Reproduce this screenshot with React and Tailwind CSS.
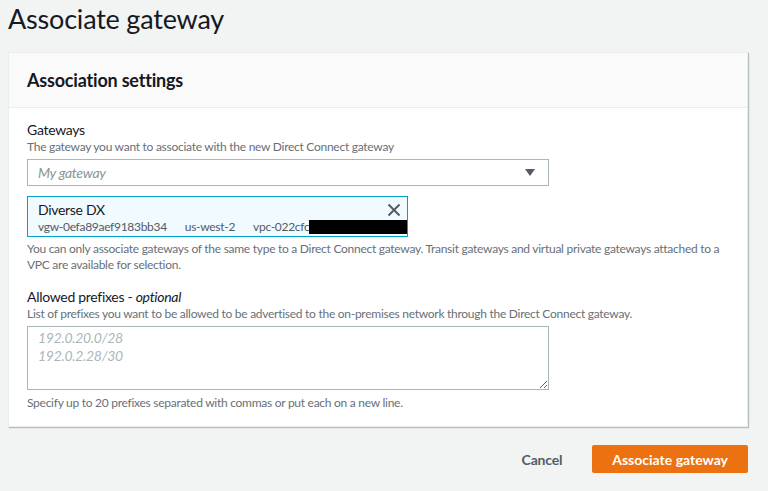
export default function App() {
  const font = { fontFamily: 'Lato, "Noto Sans", Arial, sans-serif', letterSpacing: '-0.3px' };
  return (
    <div className="min-h-[491px] bg-[#f2f3f3] text-[#16191f] font-['Lato',_'Noto_Sans',_sans-serif]">
      <div className="pl-[8px] pr-[20px]">
        {/* Page title */}
        <h1 className="h-[52px] pt-[3px] text-[27px] leading-[32px] font-normal tracking-[-0.2px]">Associate gateway</h1>

        {/* Settings card */}
        <div className="bg-white border border-[#eaeded] shadow-[1px_1px_1px_0_rgba(0,28,36,0.25)]">
          <div className="h-[55px] bg-[#fafafa] border-b border-[#eaeded] px-[18px] flex items-center">
            <h2 className="text-[18px] font-bold leading-[22px] tracking-[-0.2px]">Association settings</h2>
          </div>

          <div className="px-[18px] pt-[13px] pb-[15px]">
            {/* Gateways */}
            <div className="text-[14px] leading-[18px] tracking-[-0.3px]">Gateways</div>
            <div className="text-[12px] leading-[16px] tracking-[-0.27px] text-[#687078]">
              The gateway you want to associate with the new Direct Connect gateway
            </div>
            <div className="mt-[4px] w-[522px] h-[27px] border border-[#aab7b8] bg-white flex items-center justify-between pl-[10px] pr-[13px]">
              <span className="text-[14px] italic tracking-[-0.3px] text-[#879596]">My gateway</span>
              <svg width="10" height="7" viewBox="0 0 10 7">
                <path d="M0 0 H10 L5 7 Z" fill="#545b64" />
              </svg>
            </div>

            {/* Selected token */}
            <div className="mt-[10px] w-[381px] h-[41px] border border-[#00a1c9] bg-[#f1faff] pl-[10px] pr-[5px] pt-[4px]">
              <div className="flex items-center justify-between">
                <span className="text-[14px] leading-[18px] tracking-[-0.3px]">Diverse DX</span>
                <svg width="14" height="14" viewBox="0 0 14 14" className="mr-[1px]">
                  <path d="M1.5 1.5 L12.5 12.5 M12.5 1.5 L1.5 12.5" stroke="#545b64" strokeWidth="2" fill="none" />
                </svg>
              </div>
              <div className="flex items-center text-[12px] leading-[16px] tracking-[-0.3px] text-[#545b64]">
                <span>vgw-0efa89aef9183bb34</span>
                <span className="ml-[18px]">us-west-2</span>
                <span className="ml-[18px]">vpc-022cfc</span>
                <span className="flex-1 h-[14px] bg-black -mr-[5px]" />
              </div>
            </div>

            <p className="mt-[4px] w-[700px] text-[12px] leading-[16px] tracking-[-0.27px] text-[#687078]">
              You can only associate gateways of the same type to a Direct Connect gateway. Transit gateways and virtual private gateways attached to a VPC are available for selection.
            </p>

            {/* Allowed prefixes */}
            <div className="mt-[15px] text-[14px] leading-[18px] tracking-[-0.3px]">
              Allowed prefixes - <i>optional</i>
            </div>
            <div className="text-[12px] leading-[16px] tracking-[-0.27px] text-[#687078]">
              List of prefixes you want to be allowed to be advertised to the on-premises network through the Direct Connect gateway.
            </div>
            <textarea
              className="block mt-[4px] w-[522px] h-[64px] border border-[#aab7b8] bg-white px-[10px] pt-[2px] pb-[3px] text-[14px] leading-[18px] placeholder:italic placeholder:text-[#aab7b8] outline-none"
              placeholder={"192.0.20.0/28\n192.0.2.28/30"}
              style={font}
            />
            <div className="mt-[5px] text-[12px] leading-[16px] tracking-[-0.27px] text-[#687078]">
              Specify up to 20 prefixes separated with commas or put each on a new line.
            </div>
          </div>
        </div>

        {/* Footer actions */}
        <div className="mt-[18px] flex justify-end items-center gap-[10px]">
          <button className="h-[28px] px-[20px] text-[14px] font-bold tracking-[-0.2px] text-[#545b64]">Cancel</button>
          <button className="h-[28px] px-[20px] rounded-[2px] bg-[#ec7211] text-[14px] font-bold text-white">
            Associate gateway
          </button>
        </div>
      </div>
    </div>
  );
}
